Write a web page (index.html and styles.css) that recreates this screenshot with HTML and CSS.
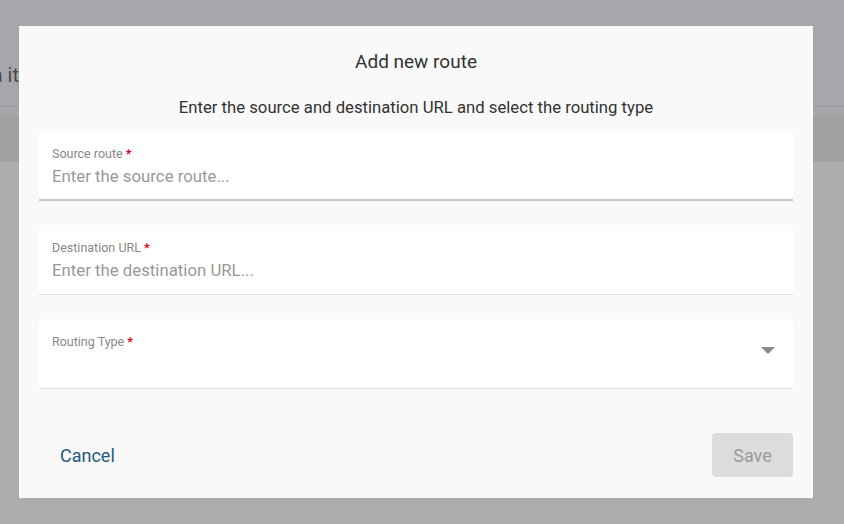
FILE: index.html
```html
<!DOCTYPE html>
<html lang="en">
<head>
<meta charset="utf-8">
<link rel="stylesheet" href="styles.css">
<title>Add new route</title>
</head>
<body>
<div class="app">
  <header class="app-header"><div class="app-text-box"><span class="app-text">Manage routes so visitors land on it</span></div></header>
  <div class="app-strip"></div>
  <div class="app-band"></div>
  <main class="app-main"></main>
</div>
<div class="overlay">
  <div class="dialog" role="dialog">
    <h2 class="dialog-title">Add new route</h2>
    <p class="dialog-sub">Enter the source and destination URL and select the routing type</p>
    <div class="fields">
      <label class="field field-active">
        <span class="field-label">Source route <span class="req">*</span></span>
        <span class="field-input">Enter the source route...</span>
      </label>
      <label class="field">
        <span class="field-label">Destination URL <span class="req">*</span></span>
        <span class="field-input">Enter the destination URL...</span>
      </label>
      <label class="field field-select">
        <span class="field-label">Routing Type <span class="req">*</span></span>
        <span class="field-input"></span>
        <svg class="caret" width="14" height="7" viewBox="0 0 14 7"><path d="M0 0h14L7 7z" fill="#8a8a8a"/></svg>
      </label>
    </div>
    <div class="actions">
      <button class="btn-cancel">Cancel</button>
      <button class="btn-save" disabled>Save</button>
    </div>
  </div>
</div>
</body>
</html>
```

FILE: styles.css
```css
* { box-sizing: border-box; }
html, body { margin: 0; padding: 0; }
body {
  width: 844px;
  height: 524px;
  overflow: hidden;
  font-family: Roboto, "Liberation Sans", sans-serif;
  position: relative;
  background: #acacac;
}
.app { display: flex; flex-direction: column; height: 524px; }
.app-header {
  height: 107px;
  background: #a6a7ab;
  border-bottom: 1px solid #98999d;
  display: flex;
  align-items: center;
}
.app-text-box {
  width: 19px;
  display: flex;
  justify-content: flex-end;
  margin-top: 44px;
}
.app-text {
  flex: none;
  font-size: 20px;
  color: #4a4b4e;
  white-space: nowrap;
}
.app-strip { height: 10px; background: #a5a6aa; }
.app-band { height: 45px; background: #a0a0a0; }
.app-main { flex: 1; background: #acacac; }

.overlay {
  position: absolute;
  inset: 0;
}
.dialog {
  position: absolute;
  left: 19px;
  top: 26px;
  width: 794px;
  height: 472px;
  background: #f9f9f9;
  padding: 0 20px;
  display: flex;
  flex-direction: column;
}
.dialog-title {
  margin: 24px 0 0;
  height: 24px;
  font-size: 19px;
  line-height: 24px;
  font-weight: 400;
  color: #333;
  text-align: center;
}
.dialog-sub {
  margin: 24px 0 0;
  font-size: 16.7px;
  line-height: 20px;
  color: #333;
  text-align: center;
}
.fields {
  margin-top: 13px;
  display: flex;
  flex-direction: column;
  gap: 24px;
}
.field {
  position: relative;
  display: flex;
  flex-direction: column;
  background: #fff;
  border-radius: 4px 4px 0 0;
  border-bottom: 1px solid #e2e2e2;
  height: 70px;
  padding: 15px 13px 0;
}
.field-active { border-bottom: 2px solid #c8c8c8; }
.field-label {
  font-size: 12.5px;
  line-height: 16px;
  color: #888;
}
.req { color: #d0021b; font-weight: 700; }
.field-input {
  margin-top: 4px;
  font-size: 16.8px;
  line-height: 20px;
  color: #999;
}
.caret {
  position: absolute;
  right: 18px;
  top: 28px;
}
.actions {
  margin-top: auto;
  margin-bottom: 21px;
  display: flex;
  justify-content: space-between;
  align-items: center;
}
.btn-cancel {
  background: none;
  border: 0;
  font-family: inherit;
  font-size: 18px;
  color: #265a7c;
  padding: 0 0 0 21px;
  cursor: pointer;
}
.btn-save {
  width: 81px;
  height: 44px;
  border: 0;
  border-radius: 4px;
  background: #dcdcdc;
  color: #9a9a9a;
  font-family: inherit;
  font-size: 18px;
}
```
